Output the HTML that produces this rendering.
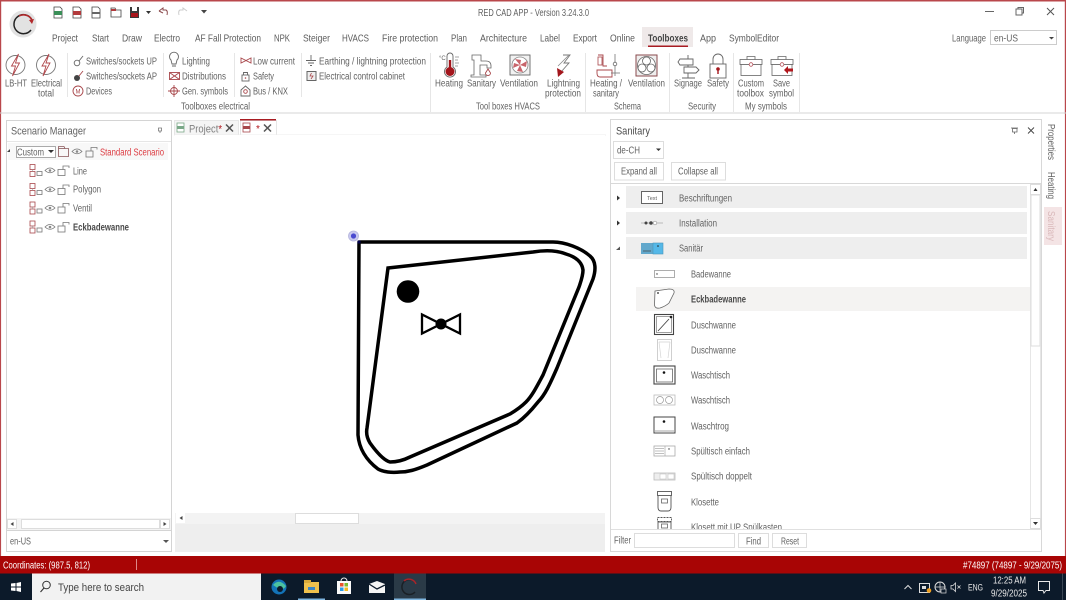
<!DOCTYPE html>
<html><head><meta charset="utf-8"><title>RED CAD APP</title>
<style>
html,body{margin:0;padding:0;width:1066px;height:600px;overflow:hidden;background:#fff}
svg{display:block}
text{font-family:"Liberation Sans",sans-serif;font-size:10px;fill:#626262;white-space:pre}
.m{font-size:10.5px;fill:#5c5c5c}
.w{fill:#fff}
.ic{fill:none;stroke:#666;stroke-width:.9}
.r{fill:none;stroke:#a8474b;stroke-width:.9}
</style></head><body>
<svg xmlns="http://www.w3.org/2000/svg" width="1066" height="600" viewBox="0 0 1066 600">
<defs>
<g id="bolt"><circle cx="0" cy="0" r="9.500" fill="none" stroke="#777" stroke-width=".9"/><path d="M3-11-4 1H0L-3 11 4-2H0Z" fill="#fff" stroke="#b0484c" stroke-width=".9"/></g>
<g id="lay"><rect x="0" y="0" width="5" height="5" fill="none" stroke="#a8474b" stroke-width=".8"/><rect x="0" y="7" width="5" height="5" fill="none" stroke="#a8474b" stroke-width=".8"/><rect x="7" y="7" width="5" height="4" fill="none" stroke="#777" stroke-width=".8"/><path d="M2.500 5V7" stroke="#999" stroke-width=".6"/></g>
<g id="eye"><path d="M0 3.500Q5-1.500 10 3.500 5 8 0 3.500Z" fill="none" stroke="#777" stroke-width=".8"/><circle cx="5" cy="3.500" r="1.300" fill="#888"/></g>
<g id="lock"><rect x="0" y="4.500" width="7" height="6" fill="none" stroke="#777" stroke-width=".8"/><path d="M5 4.500V1H11V3" fill="none" stroke="#777" stroke-width=".8"/></g>
<g id="box"><rect x="0" y="4" width="22" height="5" fill="#fff" stroke="#666" stroke-width=".8"/><rect x="1" y="9" width="20" height="11" fill="#fff" stroke="#666" stroke-width=".8"/><path d="M7 4V1H15V4" fill="none" stroke="#666" stroke-width=".8"/><circle cx="11" cy="9" r="1.800" fill="#fff" stroke="#b5525a" stroke-width=".8"/></g>
<clipPath id="tree"><rect x="612" y="184" width="418" height="345"/></clipPath>
</defs>

<!-- window frame -->
<rect width="1066" height="600" fill="#fff"/>
<rect x="0" y="0" width="1066" height="1.500" fill="#b9474b"/>
<rect x="0" y="0" width="1.200" height="556" fill="#b9474b"/>
<rect x="1064.800" y="0" width="1.200" height="556" fill="#b9474b"/>

<!-- logo -->
<circle cx="23" cy="24" r="13.500" fill="#e2e2e2"/>
<path d="M32 20A9.500 9.500 0 1 0 31 30" fill="none" stroke="#222" stroke-width="1.500"/>
<path d="M19 16A9.500 9.500 0 0 1 32 20" fill="none" stroke="#b22a2c" stroke-width="1.500"/>
<path d="M29 20L34 19 32 24Z" fill="#b22a2c"/>

<!-- QAT -->
<g>
<path d="M54 7H60L62 9V18H54Z" fill="#fff" stroke="#444" stroke-width=".8"/><rect x="54" y="11" width="8" height="4" fill="#3a8f58"/>
<path d="M73 7H79L81 9V18H73Z" fill="#fff" stroke="#444" stroke-width=".8"/><rect x="73" y="11" width="8" height="4" fill="#b23a3c"/>
<path d="M92 7H98L100 9V18H92Z" fill="#fff" stroke="#444" stroke-width=".8"/><rect x="92" y="12" width="8" height="2" fill="#666"/>
<path d="M111 8H115L116 10H121V17H111Z" fill="#fff" stroke="#444" stroke-width=".8"/><rect x="111" y="9" width="5" height="2" fill="#b23a3c"/>
<rect x="130" y="7" width="9" height="11" fill="#3a3a3a"/><rect x="132" y="7" width="5" height="4" fill="#fff"/><rect x="131" y="13" width="7" height="4" fill="#a8161c"/>
<path d="M146 11H151L148.500 14Z" fill="#333"/>
<path d="M159 11L163 8V10H166Q168 11 167 15M159 11L163 13" fill="none" stroke="#8a4a4c" stroke-width="1"/>
<path d="M187 11L183 8V10H180Q178 11 179 15" fill="none" stroke="#ccc" stroke-width="1"/>
<path d="M201 10H207L204 13.500Z" fill="#444"/>
</g>

<text x="478" y="16" textLength="111" lengthAdjust="spacingAndGlyphs">RED CAD APP - Version 3.24.3.0</text>
<path d="M985 11.500H994" stroke="#666"/>
<rect x="1016" y="9" width="6" height="6" fill="none" stroke="#666"/><path d="M1018 9V7.500H1023.500V13H1022" fill="none" stroke="#666"/>
<path d="M1047 8L1054 15M1054 8L1047 15" stroke="#555" stroke-width="1"/>

<!-- menu -->
<rect x="642" y="27" width="51" height="20" fill="#efe9e9"/>
<rect x="648" y="45.500" width="40" height="1.500" fill="#a81c22"/>
<g>
<text class="m" x="52" y="41.500" textLength="26" lengthAdjust="spacingAndGlyphs">Project</text>
<text class="m" x="92" y="41.500" textLength="17" lengthAdjust="spacingAndGlyphs">Start</text>
<text class="m" x="122" y="41.500" textLength="20" lengthAdjust="spacingAndGlyphs">Draw</text>
<text class="m" x="154" y="41.500" textLength="26" lengthAdjust="spacingAndGlyphs">Electro</text>
<text class="m" x="195" y="41.500" textLength="66" lengthAdjust="spacingAndGlyphs">AF Fall Protection</text>
<text class="m" x="274" y="41.500" textLength="16" lengthAdjust="spacingAndGlyphs">NPK</text>
<text class="m" x="303" y="41.500" textLength="27" lengthAdjust="spacingAndGlyphs">Steiger</text>
<text class="m" x="342" y="41.500" textLength="27" lengthAdjust="spacingAndGlyphs">HVACS</text>
<text class="m" x="382" y="41.500" textLength="56" lengthAdjust="spacingAndGlyphs">Fire protection</text>
<text class="m" x="451" y="41.500" textLength="16" lengthAdjust="spacingAndGlyphs">Plan</text>
<text class="m" x="480" y="41.500" textLength="47" lengthAdjust="spacingAndGlyphs">Architecture</text>
<text class="m" x="540" y="41.500" textLength="20" lengthAdjust="spacingAndGlyphs">Label</text>
<text class="m" x="573" y="41.500" textLength="24" lengthAdjust="spacingAndGlyphs">Export</text>
<text class="m" x="610" y="41.500" textLength="25" lengthAdjust="spacingAndGlyphs">Online</text>
<text class="m" x="648" y="41.500" textLength="40" lengthAdjust="spacingAndGlyphs" style="font-weight:bold;fill:#444">Toolboxes</text>
<text class="m" x="700" y="41.500" textLength="16" lengthAdjust="spacingAndGlyphs">App</text>
<text class="m" x="729" y="41.500" textLength="50" lengthAdjust="spacingAndGlyphs">SymbolEditor</text>
<text x="952" y="41.500" textLength="34" lengthAdjust="spacingAndGlyphs">Language</text>
</g>
<rect x="990.500" y="30.500" width="66" height="14" fill="#fff" stroke="#ccc"/>
<text x="994" y="41.500" textLength="24" lengthAdjust="spacingAndGlyphs">en-US</text>
<path d="M1049 37H1054L1051.500 39.500Z" fill="#444"/>

<!-- ribbon separators -->
<g stroke="#e6e6e6"><path d="M67.500 53V97M163.500 53V97M234.500 53V97M301.500 53V97M430.500 53V112M585.500 53V112M669.500 53V112M733.500 53V112M799.500 53V112"/></g>
<rect x="0" y="112.500" width="1066" height="1" fill="#d4d4d4"/>

<!-- big bolt icons -->
<use href="#bolt" x="15.500" y="65"/><use href="#bolt" x="46" y="65"/>
<text x="5" y="86.500" textLength="22" lengthAdjust="spacingAndGlyphs">LB-HT</text>
<text x="31" y="86.500" textLength="31" lengthAdjust="spacingAndGlyphs">Electrical</text>
<text x="38" y="96.500" textLength="16" lengthAdjust="spacingAndGlyphs">total</text>

<!-- small ribbon -->
<g>
<circle cx="77" cy="63" r="2.800" class="ic"/><path d="M79 61L83 56" class="ic"/>
<circle cx="77" cy="78" r="3" fill="#444"/><path d="M79 76L83 71" class="r"/>
<circle cx="78" cy="91" r="5" class="r"/><text x="75.500" y="93.500" style="font-size:6px;fill:#a8474b">M</text>
<path d="M171 60A4.500 4.500 0 1 1 177 60L176 64H172Z M172 66H176" class="ic"/>
<rect x="169.500" y="72.500" width="10" height="7" class="r"/><path d="M169.500 72.500L179.500 79.500M179.500 72.500L169.500 79.500" class="r"/>
<circle cx="174" cy="91" r="3.500" class="r"/><path d="M168 91H180M174 85V97" class="r"/>
<path d="M241 58L246 60.500 241 63ZM246 60.500L251 58V63Z" class="r"/>
<rect x="242" y="75" width="7" height="6" class="ic"/><path d="M243.500 75V72.500H247.500V75" class="ic"/><circle cx="245.500" cy="78" r=".8" fill="#a8474b"/>
<path d="M241 90L245.500 86 250 90V96H241Z" class="ic"/><circle cx="245.500" cy="91.500" r="1.800" class="r"/>
<path d="M311 55V60M306 60.500H316M308 63H314M310 65.500H312" class="ic"/>
<rect x="307" y="71.500" width="9" height="9" fill="#eee" stroke="#666"/><path d="M311.500 73L310 76H313L311 79" stroke="#a8474b" fill="none" stroke-width=".8"/>
<text x="86" y="64.500" textLength="71" lengthAdjust="spacingAndGlyphs">Switches/sockets UP</text>
<text x="86" y="79.500" textLength="71" lengthAdjust="spacingAndGlyphs">Switches/sockets AP</text>
<text x="86" y="94.500" textLength="26" lengthAdjust="spacingAndGlyphs">Devices</text>
<text x="182" y="64.500" textLength="28" lengthAdjust="spacingAndGlyphs">Lighting</text>
<text x="182" y="79.500" textLength="44" lengthAdjust="spacingAndGlyphs">Distributions</text>
<text x="182" y="94.500" textLength="46" lengthAdjust="spacingAndGlyphs">Gen. symbols</text>
<text x="253" y="64.500" textLength="42" lengthAdjust="spacingAndGlyphs">Low current</text>
<text x="253" y="79.500" textLength="21" lengthAdjust="spacingAndGlyphs">Safety</text>
<text x="253" y="94.500" textLength="35" lengthAdjust="spacingAndGlyphs">Bus / KNX</text>
<text x="319" y="64.500" textLength="107" lengthAdjust="spacingAndGlyphs">Earthing / lightning protection</text>
<text x="319" y="79.500" textLength="86" lengthAdjust="spacingAndGlyphs">Electrical control cabinet</text>
</g>

<!-- HVACS icons -->
<g>
<path d="M447 56A3 3 0 0 1 453 56V67A5.500 5.500 0 1 1 447 67Z" fill="#fff" stroke="#666" stroke-width=".9"/>
<circle cx="450" cy="71.500" r="4.500" fill="#a3161c"/><rect x="448.800" y="60" width="2.400" height="9" fill="#a3161c"/>
<path d="M455 57H459M455 60H458M455 63H459M455 66H458" stroke="#888" stroke-width=".7"/>
<text x="439" y="60" style="font-size:6px">°C</text>
<path d="M472 55H481V61H486Q491 61 491 66V68H487V65H480V75H486V77H471V75H474V60H472Z" fill="#fff" stroke="#666" stroke-width=".8"/>
<path d="M488 69L490.500 73A2.500 2.500 0 1 1 485.500 73Z" fill="#fff" stroke="#a8474b" stroke-width=".9"/>
<rect x="510" y="55" width="20" height="20" fill="#f2f2f2" stroke="#666" stroke-width=".9"/><circle cx="520" cy="65" r="8" fill="#fff" stroke="#888" stroke-width=".8"/>
<path d="M520 65L515 59 521 60ZM520 65L527 61 526 67ZM520 65L523 72 517 71ZM520 65L513 68 514 63Z" fill="#c8656b"/>
<path d="M563 55L570 55 564 63H569L561 72" fill="none" stroke="#777" stroke-width=".9"/><path d="M569 55L558 66" stroke="#888" fill="none" stroke-width=".8"/>
<path d="M557 68L564 72 558 77Z" fill="#a3161c"/>
<path d="M598 55H603V66H607" class="r"/><rect x="598" y="57" width="4" height="8" fill="none" stroke="#a8474b" stroke-width=".8"/>
<path d="M597 70H612V77H600Q597 77 597 73Z" class="r"/>
<path d="M615 54V76" stroke="#777" stroke-width=".8"/><circle cx="615" cy="64" r="1.800" fill="#fff" stroke="#666" stroke-width=".8"/><path d="M611 73H620" stroke="#777" stroke-width=".8"/>
<rect x="636" y="55" width="21" height="21" fill="#eee" stroke="#8a4a4c" stroke-width="1"/><circle cx="646.500" cy="65.500" r="9" fill="#fff" stroke="#666" stroke-width=".8"/>
<circle cx="646.500" cy="61" r="4" fill="none" stroke="#666" stroke-width=".8"/><circle cx="642" cy="68" r="4" fill="none" stroke="#666" stroke-width=".8"/><circle cx="651" cy="68" r="4" fill="none" stroke="#666" stroke-width=".8"/>
<path d="M688 55V78M682 78H695" stroke="#666" stroke-width=".9" fill="none"/>
<path d="M680 59H693V65H680L678 62ZM684 67H696L699 70 696 73H684Z" fill="#fff" stroke="#666" stroke-width=".9"/>
<rect x="710" y="64" width="16" height="14" fill="#fff" stroke="#666" stroke-width=".9"/><path d="M713 64V59A5 5 0 0 1 723 59V64" fill="none" stroke="#666" stroke-width=".9"/>
<circle cx="718" cy="69" r="1.800" fill="#a3161c"/><rect x="717.300" y="70" width="1.400" height="4" fill="#a3161c"/>
<use href="#box" x="740" y="55.500"/><use href="#box" x="771" y="55.500"/>
<path d="M784 70L788 66V68.500H793V71.500H788V74Z" fill="#b2161c"/>
<text x="435" y="86.500" textLength="28" lengthAdjust="spacingAndGlyphs">Heating</text>
<text x="467" y="86.500" textLength="29" lengthAdjust="spacingAndGlyphs">Sanitary</text>
<text x="500" y="86.500" textLength="38" lengthAdjust="spacingAndGlyphs">Ventilation</text>
<text x="547" y="86.500" textLength="33" lengthAdjust="spacingAndGlyphs">Lightning</text>
<text x="545" y="96.500" textLength="36" lengthAdjust="spacingAndGlyphs">protection</text>
<text x="590" y="86.500" textLength="32" lengthAdjust="spacingAndGlyphs">Heating /</text>
<text x="593" y="96.500" textLength="26" lengthAdjust="spacingAndGlyphs">sanitary</text>
<text x="628" y="86.500" textLength="37" lengthAdjust="spacingAndGlyphs">Ventilation</text>
<text x="674" y="86.500" textLength="28" lengthAdjust="spacingAndGlyphs">Signage</text>
<text x="707" y="86.500" textLength="22" lengthAdjust="spacingAndGlyphs">Safety</text>
<text x="738" y="86.500" textLength="26" lengthAdjust="spacingAndGlyphs">Custom</text>
<text x="737" y="96.500" textLength="27" lengthAdjust="spacingAndGlyphs">toolbox</text>
<text x="773" y="86.500" textLength="17" lengthAdjust="spacingAndGlyphs">Save</text>
<text x="769" y="96.500" textLength="25" lengthAdjust="spacingAndGlyphs">symbol</text>
<text x="181" y="109.500" textLength="69" lengthAdjust="spacingAndGlyphs">Toolboxes electrical</text>
<text x="476" y="109.500" textLength="64" lengthAdjust="spacingAndGlyphs">Tool boxes HVACS</text>
<text x="614" y="109.500" textLength="27" lengthAdjust="spacingAndGlyphs">Schema</text>
<text x="688" y="109.500" textLength="28" lengthAdjust="spacingAndGlyphs">Security</text>
<text x="745" y="109.500" textLength="42" lengthAdjust="spacingAndGlyphs">My symbols</text>
</g>

<!-- body background -->
<rect x="1.200" y="114" width="1063.600" height="442" fill="#fff"/>

<!-- Scenario Manager panel -->
<rect x="6.500" y="120.500" width="165" height="431" fill="#fff" stroke="#d4d4d4"/>
<rect x="7" y="141" width="164" height="1" fill="#e6e6e6"/>
<text x="11" y="134.500" textLength="75" lengthAdjust="spacingAndGlyphs" style="font-size:11px">Scenario Manager</text>
<path d="M158.500 128H161.500V131H158.500ZM160 131V133" stroke="#777" fill="none" stroke-width=".8"/>
<rect x="8" y="143" width="160" height="17" fill="#f8f8f8"/>
<path d="M7 152L10 149V152Z" fill="#444"/>
<rect x="16.500" y="146.500" width="39" height="11" fill="#fff" stroke="#aaa"/>
<text x="17" y="155.500" textLength="27" lengthAdjust="spacingAndGlyphs">Custom</text>
<path d="M48 150H54L51 153Z" fill="#333"/>
<path d="M58.500 146.500H64L65 148.500H68.500V156.500H58.500Z" fill="none" stroke="#885558" stroke-width=".8"/><path d="M58.500 148.500H65" fill="none" stroke="#885558" stroke-width=".8"/>
<use href="#eye" x="72" y="148"/><use href="#lock" x="86" y="146.500"/>
<text x="100" y="155.500" textLength="64" lengthAdjust="spacingAndGlyphs" style="fill:#dc3a40">Standard Scenario</text>
<use href="#lay" x="30" y="164.500"/><use href="#eye" x="45" y="167"/><use href="#lock" x="58" y="165"/>
<use href="#lay" x="30" y="183.500"/><use href="#eye" x="45" y="186"/><use href="#lock" x="58" y="184"/>
<use href="#lay" x="30" y="202"/><use href="#eye" x="45" y="204.500"/><use href="#lock" x="58" y="202.500"/>
<use href="#lay" x="30" y="221"/><use href="#eye" x="45" y="223.500"/><use href="#lock" x="58" y="221.500"/>
<text x="73" y="174.500" textLength="14" lengthAdjust="spacingAndGlyphs">Line</text>
<text x="73" y="192.500" textLength="28" lengthAdjust="spacingAndGlyphs">Polygon</text>
<text x="73" y="211.500" textLength="19" lengthAdjust="spacingAndGlyphs">Ventil</text>
<text x="73" y="230.500" textLength="56" lengthAdjust="spacingAndGlyphs" style="font-weight:bold;fill:#4a4a4a">Eckbadewanne</text>
<!-- left scrollbar -->
<rect x="7" y="518" width="164" height="12" fill="#f4f4f4"/>
<rect x="7.500" y="519.500" width="9" height="9" fill="#fff" stroke="#ddd"/><path d="M13.500 522V526L10.500 524Z" fill="#444"/>
<rect x="21.500" y="519.500" width="138" height="9" fill="#fff" stroke="#ddd"/>
<rect x="160.500" y="519.500" width="9" height="9" fill="#fff" stroke="#ddd"/><path d="M163.500 522V526L166.500 524Z" fill="#444"/>
<rect x="7" y="530" width="164" height="1" fill="#d4d4d4"/>
<text x="10" y="544.500" textLength="21" lengthAdjust="spacingAndGlyphs">en-US</text>
<path d="M163 540H169L166 543Z" fill="#555"/>

<!-- Tabs -->
<rect x="174.500" y="120.500" width="64" height="14.500" fill="#f5f5f5" stroke="#e6e6e6"/>
<rect x="240.500" y="120.500" width="36" height="14.500" fill="#fff" stroke="#e6e6e6"/>
<rect x="240" y="119" width="36" height="1.500" fill="#a81c22"/>
<rect x="174" y="134.500" width="432" height="1" fill="#ececec"/>
<rect x="177" y="123" width="7" height="9" fill="#fff" stroke="#7aa888" stroke-width=".8"/><rect x="177" y="126" width="7" height="3" fill="#7aa888"/>
<text x="189" y="132.500" textLength="33" lengthAdjust="spacingAndGlyphs" style="font-size:11px;fill:#808080">Project<tspan fill="#b2161c">*</tspan></text>
<path d="M226 124.500L233 131.500M233 124.500L226 131.500" stroke="#555" stroke-width="1.500"/>
<rect x="243" y="123" width="7" height="9" fill="#fff" stroke="#a8474b" stroke-width=".8"/><rect x="243" y="126" width="7" height="3" fill="#a8474b"/>
<text x="256" y="132" style="font-size:10px;fill:#b2161c">*</text>
<path d="M264 124.500L271 131.500M271 124.500L264 131.500" stroke="#555" stroke-width="1.500"/>

<!-- canvas -->
<rect x="175" y="135" width="430" height="378" fill="#fff"/>
<path d="M359 242H553C565 242 581 248 590 256C596 261 596 270 593 279L557 368C550 384 545 395 538 402C530 412 524 418 517 423L427 465C415 470 408 472 400 472C392 473 383 472 378 469C366 460 359 448 358 435Z" fill="none" stroke="#000" stroke-width="3.500" stroke-linejoin="round"/>
<path d="M388 268L533 252C545 250 556 250 566 254C576 257 582 262 583 270C583 276 581 281 579 287L543 375C536 388 532 396 526 402C520 408 515 411 510 414L410 457C402 461 396 462 390 462C383 460 375 450 370 443C367 438 366 433 367 428Z" fill="none" stroke="#000" stroke-width="3.500"/>
<circle cx="408" cy="291.500" r="11.300" fill="#000"/>
<path d="M422 314.500V333.500L460 314.500V333.500Z" fill="none" stroke="#000" stroke-width="2.300"/>
<circle cx="441" cy="324" r="5.500" fill="#000"/>
<circle cx="353.500" cy="236" r="5" fill="#c9c9ee" stroke="#b5b5dd" stroke-width=".8"/><circle cx="353.500" cy="236" r="2.600" fill="#4a4ad0"/>
<rect x="357.500" y="240.500" width="3" height="3" fill="#00004a"/>

<!-- canvas scrollbars -->
<rect x="175" y="513" width="430" height="11" fill="#f3f3f3"/>
<rect x="176" y="513" width="9" height="10" fill="#fff"/><path d="M182.500 516V520L179.500 518Z" fill="#444"/>
<rect x="295.500" y="513.500" width="63" height="10" fill="#fff" stroke="#ddd"/>
<rect x="175" y="524" width="430" height="28" fill="#eeeeee"/>

<!-- Sanitary panel -->
<rect x="610.500" y="119.500" width="431" height="432" fill="#fff" stroke="#d8d8d8"/>
<text x="616" y="134.500" textLength="34" lengthAdjust="spacingAndGlyphs" style="font-size:11px;fill:#4c4c4c">Sanitary</text>
<path d="M1012.500 128.500H1017V132H1012.500ZM1014.500 132V134M1011 128H1018" stroke="#666" fill="none" stroke-width=".8"/>
<path d="M1028 127.500L1034 133.500M1034 127.500L1028 133.500" stroke="#444" stroke-width=".9"/>
<rect x="613.500" y="141.500" width="50" height="17" fill="#fff" stroke="#ddd"/>
<text x="617" y="153.500" textLength="23" lengthAdjust="spacingAndGlyphs">de-CH</text>
<path d="M656 148.500H661L658.500 151Z" fill="#333"/>
<rect x="614.500" y="162.500" width="49" height="17.500" fill="#fff" stroke="#ddd"/>
<rect x="671.500" y="162.500" width="54" height="17.500" fill="#fff" stroke="#ddd"/>
<text x="621" y="174.500" textLength="36" lengthAdjust="spacingAndGlyphs">Expand all</text>
<text x="678" y="174.500" textLength="40" lengthAdjust="spacingAndGlyphs">Collapse all</text>
<rect x="611" y="183" width="430" height="1" fill="#d8d8d8"/>

<g clip-path="url(#tree)">
<rect x="626" y="186" width="401" height="22" fill="#eeeeee"/>
<rect x="626" y="212" width="401" height="22" fill="#eeeeee"/>
<rect x="626" y="237" width="401" height="22" fill="#eeeeee"/>
<rect x="636" y="287" width="394" height="24" fill="#f4f3f2"/>
<path d="M617 195.500L620 198 617 200.500Z" fill="#333"/>
<path d="M617 220.500L620 223 617 225.500Z" fill="#333"/>
<path d="M616 250L620 246.500V250Z" fill="#555"/>
<rect x="641.500" y="191.500" width="21" height="12" fill="#fff" stroke="#555" stroke-width=".9"/>
<text x="647" y="200" textLength="10" lengthAdjust="spacingAndGlyphs" style="font-size:5px">Text</text>
<path d="M641 223H663" stroke="#aaa" stroke-width=".7"/><circle cx="646" cy="223" r="1.500" fill="#444"/><circle cx="651" cy="223" r="1.800" fill="#444"/><circle cx="655" cy="223" r="1.800" fill="#fff" stroke="#999" stroke-width=".7"/>
<rect x="641" y="243" width="12" height="11" fill="#62a8cc"/><path d="M643 251H651" stroke="#444" stroke-width=".7"/>
<rect x="653" y="243" width="10" height="11" fill="#55b8e8" stroke="#4a94b8" stroke-width=".6"/><circle cx="658" cy="246" r=".8" fill="#222"/>
<text x="679" y="201.500" textLength="53" lengthAdjust="spacingAndGlyphs">Beschriftungen</text>
<text x="679" y="226.500" textLength="38" lengthAdjust="spacingAndGlyphs">Installation</text>
<text x="679" y="251.500" textLength="24" lengthAdjust="spacingAndGlyphs">Sanitär</text>
<rect x="654.500" y="270.500" width="20" height="7" fill="#fff" stroke="#999" stroke-width=".8"/><circle cx="657" cy="274" r=".7" fill="#333"/>
<path d="M655 291L669 289Q675 289 674 293L669 303Q666 306 660 308Q655 309 654.500 305Z" fill="#fff" stroke="#666" stroke-width=".8"/><circle cx="658" cy="293" r=".9" fill="#222"/>
<rect x="654.500" y="314.500" width="19" height="20" fill="#fff" stroke="#444" stroke-width="1.100"/><rect x="656.500" y="316.500" width="15" height="16" fill="none" stroke="#777" stroke-width=".7"/><path d="M658 331L669 319" stroke="#444" stroke-width=".9"/><circle cx="671" cy="317" r="1.300" fill="#222"/>
<rect x="657.500" y="339.500" width="14" height="21" fill="#fff" stroke="#c4c4c4" stroke-width=".8"/><path d="M659 342H670M659 342L661 358M670 342L668 358" stroke="#d4d4d4" fill="none" stroke-width=".7"/>
<rect x="654" y="366" width="21" height="18" fill="#fff" stroke="#444" stroke-width="1.100"/><rect x="656.500" y="369" width="16" height="13" fill="none" stroke="#666" stroke-width=".8"/><circle cx="664" cy="372.500" r="1.300" fill="#111"/>
<rect x="654" y="395" width="21" height="10" fill="#fff" stroke="#bbb" stroke-width=".8"/><circle cx="660" cy="400" r="3.500" fill="none" stroke="#999" stroke-width=".7"/><circle cx="669" cy="400" r="3.500" fill="none" stroke="#999" stroke-width=".7"/>
<rect x="654" y="417" width="21" height="16" fill="#fff" stroke="#444" stroke-width="1"/><path d="M655 431H674" stroke="#888" stroke-width=".7"/><circle cx="664" cy="421.500" r="1.300" fill="#111"/>
<rect x="654" y="446" width="21" height="10" fill="#fff" stroke="#aaa" stroke-width=".8"/><path d="M655 448.500H664M655 451H664M655 453.500H664M665 446V456" stroke="#aaa" stroke-width=".7"/><circle cx="669" cy="449" r=".7" fill="#333"/>
<rect x="654" y="473" width="21" height="7" fill="#eee" stroke="#bbb" stroke-width=".8"/><rect x="660" y="474" width="6" height="5" fill="#fff" stroke="#bbb" stroke-width=".5"/><rect x="668" y="474" width="6" height="5" fill="#fff" stroke="#bbb" stroke-width=".5"/>
<rect x="657.500" y="491.500" width="14" height="4" fill="#fff" stroke="#555" stroke-width=".9"/><path d="M658 496V507Q658 511 661 511H668Q671 511 671 507V496" fill="#fff" stroke="#555" stroke-width=".9"/><rect x="661.500" y="499" width="6" height="4" fill="none" stroke="#666" stroke-width=".8"/>
<rect x="657.500" y="517.500" width="14" height="4" fill="#fff" stroke="#555" stroke-dasharray="2 1" stroke-width=".9"/><rect x="658" y="522" width="13" height="10" fill="#fff" stroke="#555" stroke-width=".9"/><rect x="661.500" y="524" width="6" height="4" fill="none" stroke="#666" stroke-width=".8"/>
<text x="691" y="277.500" textLength="40" lengthAdjust="spacingAndGlyphs">Badewanne</text>
<text x="691" y="302.500" textLength="55" lengthAdjust="spacingAndGlyphs" style="font-weight:bold;fill:#4a4a4a">Eckbadewanne</text>
<text x="691" y="328.500" textLength="45" lengthAdjust="spacingAndGlyphs">Duschwanne</text>
<text x="691" y="353.500" textLength="45" lengthAdjust="spacingAndGlyphs">Duschwanne</text>
<text x="691" y="378.500" textLength="39" lengthAdjust="spacingAndGlyphs">Waschtisch</text>
<text x="691" y="403.500" textLength="39" lengthAdjust="spacingAndGlyphs">Waschtisch</text>
<text x="691" y="429.500" textLength="38" lengthAdjust="spacingAndGlyphs">Waschtrog</text>
<text x="691" y="454.500" textLength="59" lengthAdjust="spacingAndGlyphs">Spültisch einfach</text>
<text x="691" y="479.500" textLength="61" lengthAdjust="spacingAndGlyphs">Spültisch doppelt</text>
<text x="691" y="505.500" textLength="28" lengthAdjust="spacingAndGlyphs">Klosette</text>
<text x="691" y="530.500" textLength="91" lengthAdjust="spacingAndGlyphs">Klosett mit UP Spülkasten</text>
</g>
<!-- right vscroll -->
<rect x="1030.500" y="184.500" width="10" height="344" fill="#fff" stroke="#e6e6e6"/>
<rect x="1030.500" y="184.500" width="10" height="10" fill="#fff" stroke="#ddd"/><path d="M1033.500 191L1035.500 188 1037.500 191Z" fill="#333"/>
<rect x="1031" y="195" width="9" height="151" fill="#fff" stroke="#ddd"/>
<rect x="1030.500" y="518.500" width="10" height="10" fill="#fff" stroke="#ddd"/><path d="M1033 522H1038L1035.500 525Z" fill="#333"/>
<rect x="611" y="529" width="430" height="1" fill="#e0e0e0"/>
<text x="614" y="543.500" textLength="17" lengthAdjust="spacingAndGlyphs">Filter</text>
<rect x="634.500" y="533.500" width="100" height="14" fill="#fff" stroke="#ddd"/>
<rect x="738.500" y="533.500" width="30" height="14" fill="#fff" stroke="#ddd"/>
<rect x="772.500" y="533.500" width="34" height="14" fill="#fff" stroke="#ddd"/>
<text x="746" y="544.500" textLength="15" lengthAdjust="spacingAndGlyphs">Find</text>
<text x="781" y="544.500" textLength="18" lengthAdjust="spacingAndGlyphs">Reset</text>

<!-- right side tabs -->
<rect x="1044" y="207" width="18" height="38" fill="#f4e4e5"/>
<text transform="translate(1048,124) rotate(90)" textLength="36" lengthAdjust="spacingAndGlyphs">Properties</text>
<text transform="translate(1048,172) rotate(90)" textLength="27" lengthAdjust="spacingAndGlyphs">Heating</text>
<text transform="translate(1048,211) rotate(90)" textLength="30" lengthAdjust="spacingAndGlyphs" style="fill:#d9b8ba">Sanitary</text>

<!-- status bar -->
<rect x="0" y="556" width="1066" height="17.500" fill="#a80505"/>
<rect x="136" y="559" width="1" height="11" fill="#d88"/>
<text class="w" x="3" y="568.500" textLength="87" lengthAdjust="spacingAndGlyphs">Coordinates: (987.5, 812)</text>
<text class="w" x="963" y="568.500" textLength="99" lengthAdjust="spacingAndGlyphs">#74897 (74897 - 9/29/2075)</text>

<!-- taskbar -->
<rect x="0" y="573.500" width="1066" height="26.500" fill="#0c1a2a"/>
<path d="M11 583.500L15.500 583V586.500H11ZM16.500 583L21 582V586.500H16.500ZM11 587.500H15.500V591L11 590.500ZM16.500 587.500H21V592L16.500 591Z" fill="#fff"/>
<rect x="32" y="573.500" width="229" height="26.500" fill="#f2f2f2"/>
<circle cx="46.500" cy="585" r="3.800" fill="none" stroke="#333"/><path d="M44 588L40.500 592" stroke="#333" stroke-width="1.100"/>
<text x="58" y="591" textLength="86" lengthAdjust="spacingAndGlyphs" style="font-size:11px;fill:#444">Type here to search</text>
<circle cx="279" cy="587" r="7.500" fill="#1373b8"/><path d="M273 585Q279 578 286 586Q284 590 279 589" fill="#4cc2a0"/><circle cx="280" cy="589" r="3" fill="#0c1a2a"/>
<rect x="304" y="582" width="15" height="11" fill="#f0c14d"/><rect x="304" y="580" width="7" height="3" fill="#d9a93a"/><rect x="308" y="587" width="7" height="3" fill="#3c86c6"/>
<rect x="298" y="598.500" width="27" height="1.500" fill="#7fb6e0"/>
<path d="M341 581A3 3 0 0 1 347 581" fill="none" stroke="#eee"/><rect x="337" y="581" width="14" height="13" fill="#fafafa"/>
<rect x="340" y="583" width="3.500" height="3.500" fill="#e8522d"/><rect x="344.500" y="583" width="3.500" height="3.500" fill="#7cbb2f"/><rect x="340" y="587.500" width="3.500" height="3.500" fill="#2a9ce8"/><rect x="344.500" y="587.500" width="3.500" height="3.500" fill="#f4b820"/>
<path d="M369 584L377 581 385 584V593H369Z" fill="#f5f5f5"/><path d="M369 584L377 589 385 585" fill="none" stroke="#0c1a2a" stroke-width="1.300"/>
<rect x="394" y="573.500" width="32" height="26.500" fill="#2a3a47"/>
<path d="M415 582A7.500 7.500 0 1 0 415 592" fill="none" stroke="#1a2026" stroke-width="1.500"/><path d="M404 581A7.500 7.500 0 0 1 416 584" fill="none" stroke="#a8252a" stroke-width="1.500"/>
<rect x="394" y="598.500" width="32" height="1.500" fill="#7fb6e0"/>
<!-- tray -->
<path d="M904.500 589L908 585.500 911.500 589" fill="none" stroke="#ddd"/>
<rect x="919.500" y="583.500" width="10" height="9" fill="none" stroke="#ddd"/><rect x="922" y="586" width="4" height="3" fill="#ddd"/><circle cx="929" cy="590.500" r="2.300" fill="#f0a020"/>
<circle cx="940" cy="587" r="5" fill="none" stroke="#ddd"/><path d="M935 587H945M940 582V592" stroke="#ddd" stroke-width=".7"/><rect x="941" y="589" width="5" height="4" fill="#0c1a2a" stroke="#ddd" stroke-width=".7"/>
<path d="M951 585.500H953L955.500 583V591.500L953 589H951Z" fill="none" stroke="#ddd" stroke-width=".8"/><path d="M957.500 585.500L960.500 588.500M960.500 585.500L957.500 588.500" stroke="#ddd" stroke-width=".8"/>
<text x="968" y="590.500" textLength="15" lengthAdjust="spacingAndGlyphs" style="fill:#e8e8e8;font-size:9px">ENG</text>
<text x="993" y="583.500" textLength="33" lengthAdjust="spacingAndGlyphs" style="fill:#e8e8e8">12:25 AM</text>
<text x="991" y="596.500" textLength="36" lengthAdjust="spacingAndGlyphs" style="fill:#e8e8e8">9/29/2025</text>
<path d="M1038.500 581.500H1049.500V590.500H1046L1044 593 1043 590.500H1038.500Z" fill="none" stroke="#e8e8e8"/>
<rect x="1062" y="573.500" width="1" height="26.500" fill="#3a4654"/>
</svg>
</body></html>
